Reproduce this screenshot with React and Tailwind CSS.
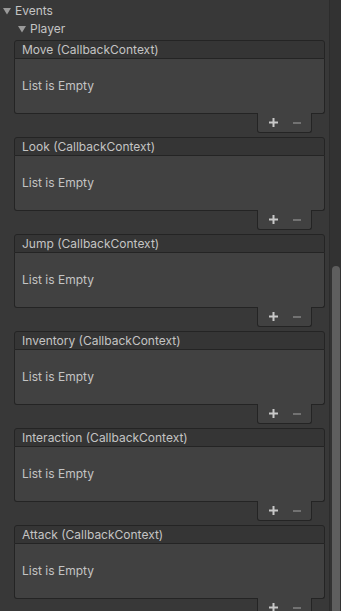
import React from 'react';

const events = ['Move', 'Look', 'Jump', 'Inventory', 'Interaction', 'Attack'];

function Arrow() {
  return (
    <svg width="8" height="8" viewBox="0 0 8 8" className="shrink-0">
      <polygon points="0,1 8,1 4,7.5" fill="#9a9a9a" />
    </svg>
  );
}

function EventList({ name }) {
  return (
    <div className="ml-[14px] w-[311px] flex flex-col mb-[4px]">
      <div className="h-[19px] bg-[#353535] border border-[#242424] rounded-t-[3px] flex items-center pl-[7px] text-[12px] text-[#c4c4c4]">
        {name} (CallbackContext)
      </div>
      <div className="h-[55px] bg-[#414141] border border-t-0 border-[#242424] rounded-b-[3px] flex items-center pl-[7px] text-[12px] text-[#c4c4c4]">
        List is Empty
      </div>
      <div className="self-end mr-[13px] -mt-px w-[55px] h-[20px] bg-[#414141] border border-t-0 border-[#242424] rounded-b-[3px] flex items-center pl-[11px] gap-[15px]">
        <svg width="9" height="9" viewBox="0 0 9 9">
          <rect x="3.5" y="0" width="2" height="9" fill="#c8c8c8" />
          <rect x="0" y="3.5" width="9" height="2" fill="#c8c8c8" />
        </svg>
        <span className="w-[8px] h-[2px] bg-[#727272]" />
      </div>
    </div>
  );
}

export default function App() {
  return (
    <div className="w-[341px] h-[611px] bg-[#383838] flex overflow-hidden font-['Inter',sans-serif]">
      <div className="flex-1 flex flex-col pt-[2px]">
        <div className="h-[18px] flex items-center gap-[4px] pl-[3px] text-[12px] text-[#c4c4c4]">
          <Arrow />
          <span>Events</span>
        </div>
        <div className="h-[18px] flex items-center gap-[4px] pl-[18px] text-[12px] text-[#c4c4c4]">
          <Arrow />
          <span>Player</span>
        </div>
        <div className="mt-[2px] flex flex-col">
          {events.map((e) => (
            <EventList key={e} name={e} />
          ))}
        </div>
      </div>
      <div className="w-[12px] bg-[#323232] border-l border-[#2c2c2c] flex justify-center">
        <div className="mt-[266px] w-[8px] h-[400px] rounded-full bg-[#5e5e5e]" />
      </div>
    </div>
  );
}
